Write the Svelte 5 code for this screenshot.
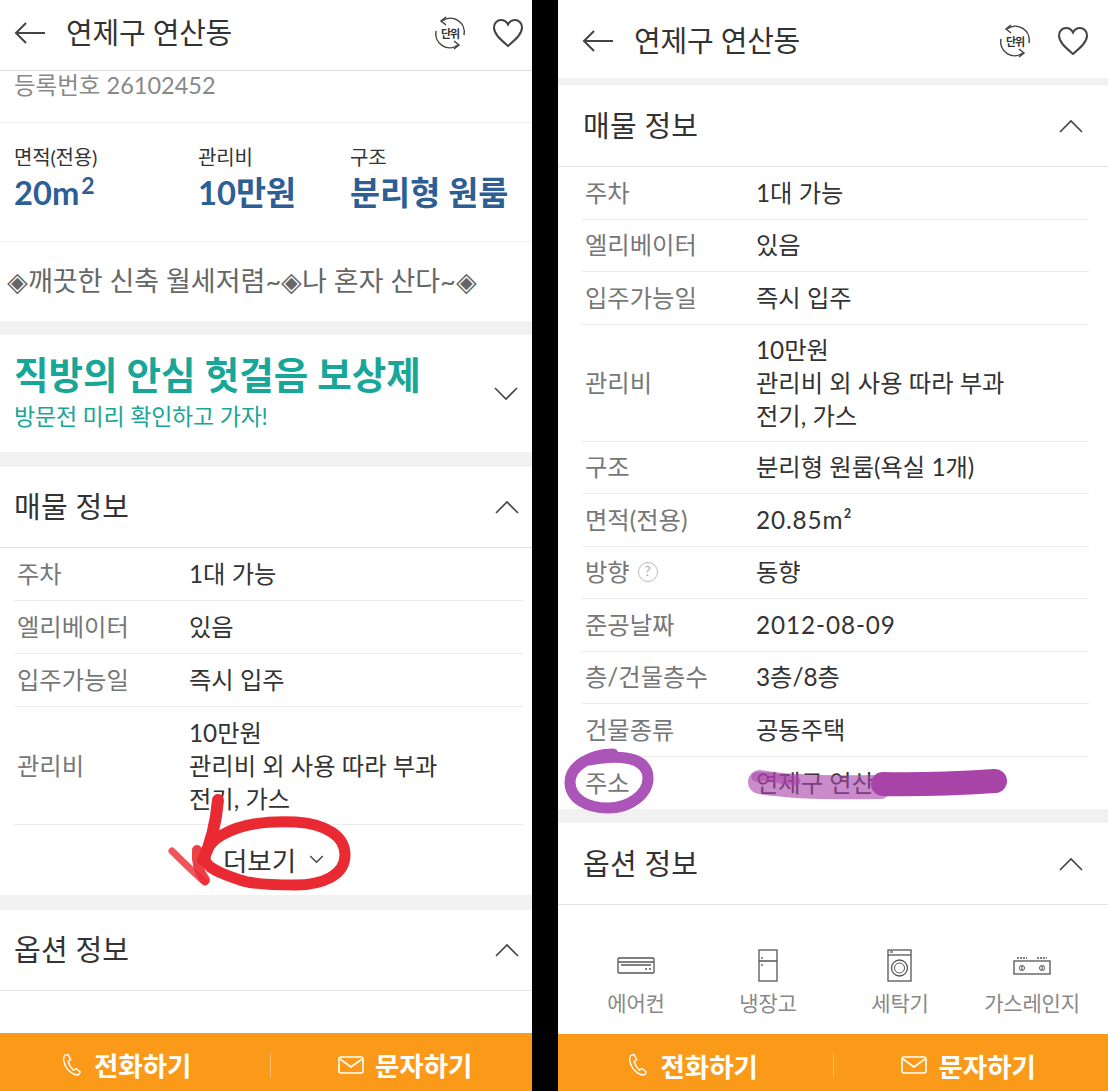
<script>
  const leftRows = [
    { label: '주차', lines: ['1대 가능'] },
    { label: '엘리베이터', lines: ['있음'] },
    { label: '입주가능일', lines: ['즉시 입주'] },
    { label: '관리비', lines: ['10만원', '관리비 외 사용 따라 부과', '전기, 가스'], tall: true }
  ];
  const rightRows = [
    ...leftRows,
    { label: '구조', lines: ['분리형 원룸(욕실 1개)'] },
    { label: '면적(전용)', lines: ['20.85m²'], num: true },
    { label: '방향', lines: ['동향'], help: true },
    { label: '준공날짜', lines: ['2012-08-09'], num: true },
    { label: '층/건물층수', lines: ['3층/8층'] },
    { label: '건물종류', lines: ['공동주택'] },
    { label: '주소', lines: ['연제구 연산동'], last: true }
  ];
  const stats = [
    { label: '면적(전용)', value: '20m', sup: '2', width: 184 },
    { label: '관리비', value: '10만원', width: 152 },
    { label: '구조', value: '분리형 원룸', width: 170 }
  ];
  const options = ['에어컨', '냉장고', '세탁기', '가스레인지'];
</script>

{#snippet back()}
  <svg class="back" viewBox="0 0 32 24" width="32" height="24" fill="none" stroke="#444" stroke-width="2">
    <path d="M31 12H2M12 2 2 12l10 10" />
  </svg>
{/snippet}

{#snippet header(sub)}
  <header class="top" class:sub>
    {@render back()}
    <h1>연제구 연산동</h1>
    <div class="unit">
      <svg viewBox="0 0 34 34" width="34" height="34" fill="none" stroke="#444" stroke-width="1.500">
        <path d="M9 5A14 14 0 0 1 31 19M25 29A14 14 0 0 1 3 15" />
        <path d="M13 1 8 5l5 4M21 33l5-4-5-4" />
      </svg>
      <span>단위</span>
    </div>
    <svg class="heart" viewBox="0 0 32 30" width="32" height="30" fill="none" stroke="#444" stroke-width="2">
      <path d="M16 28C8 21 2 16 2 9.500C2 5 5.500 2 9 2c3 0 5.500 1.500 7 4.500C17.500 3.500 20 2 23 2c3.500 0 7 3 7 7.500C30 16 24 21 16 28Z" />
    </svg>
  </header>
{/snippet}

{#snippet sectionHead(title)}
  <div class="section-head">
    <h2>{title}</h2>
    <svg viewBox="0 0 24 14" width="24" height="14" fill="none" stroke="#444" stroke-width="1.600"><path d="M1 13 12 2l11 11" /></svg>
  </div>
{/snippet}

{#snippet infoRows(rows)}
  <div class="rows">
    {#each rows as row}
      <div class="row" class:tall={row.tall} class:last={row.last}>
        <div class="label">
          {row.label}
          {#if row.help}<span class="help">?</span>{/if}
        </div>
        <div class="value" class:num={row.num}>
          {#each row.lines as line}<div>{line}</div>{/each}
        </div>
      </div>
    {/each}
  </div>
{/snippet}

{#snippet actions()}
  <div class="actions">
    <div class="action call">
      <svg viewBox="0 0 24 26" width="21" height="24" fill="none" stroke="#fff" stroke-width="1.600" stroke-linejoin="round">
        <path d="M3 2 7 1l3 6-3 2c1 4 3 7 6 10l3-2 5 4-2 3c-2 1-5 0-8-2C6 19 3 13 2 8 1.600 5 2 3 3 2Z" />
      </svg>
      <span>전화하기</span>
    </div>
    <i></i>
    <div class="action sms">
      <svg viewBox="0 0 26 18" width="26" height="18" fill="none" stroke="#fff" stroke-width="1.600">
        <rect x="1" y="1" width="24" height="16" rx="2" /><path d="m2 3 11 8 11-8" />
      </svg>
      <span>문자하기</span>
    </div>
  </div>
{/snippet}

<main class="page">
  <section class="phone left">
    {@render header(false)}
    <div class="reg">등록번호 26102452</div>
    <div class="stats">
      {#each stats as s}
        <div style="width: {s.width}px">
          <div class="stat-label">{s.label}</div>
          <div class="stat-value">{s.value}{#if s.sup}<sup>{s.sup}</sup>{/if}</div>
        </div>
      {/each}
    </div>
    <p class="desc">◈깨끗한 신축 월세저렴~◈나 혼자 산다~◈</p>
    <div class="promo">
      <div class="promo-text">
        <div class="promo-title">직방의 안심 헛걸음 보상제</div>
        <div class="promo-sub">방문전 미리 확인하고 가자!</div>
      </div>
      <svg viewBox="0 0 24 14" width="24" height="14" fill="none" stroke="#444" stroke-width="1.600"><path d="M1 1l11 11L23 1" /></svg>
    </div>
    {@render sectionHead('매물 정보')}
    {@render infoRows(leftRows)}
    <div class="more">
      <span>더보기</span>
      <svg viewBox="0 0 16 10" width="15" height="9" fill="none" stroke="#444" stroke-width="1.500"><path d="m1 1 7 7 7-7" /></svg>
      <svg class="scribble red" viewBox="0 0 190 100" width="190" height="100" fill="none" stroke="#ea2a33" stroke-linecap="round" stroke-linejoin="round">
        <path stroke-width="11" d="M56 24C80 10 110 10 130 11c30 2 49 14 49 33 0 20-22 30-50 30-22 0-44-1-55-5-18-6-35-12-35-22 0-9 8-18 17-23" />
        <path stroke-width="12" d="M52-11C50 12 44 34 37 49" />
        <path stroke-width="7" opacity=".8" d="M6 40C16 50 28 62 39 71" />
        <path stroke-width="10" opacity=".9" d="M31 39c-1 12 2 22 8 30" />
      </svg>
    </div>
    {@render sectionHead('옵션 정보')}
    <div class="spacer"></div>
    {@render actions()}
  </section>

  <section class="phone right">
    {@render header(true)}
    {@render sectionHead('매물 정보')}
    {@render infoRows(rightRows)}
    {@render sectionHead('옵션 정보')}
    <div class="options">
      {#each options as name, i}
        <div class="option">
          <div class="opt-icon">
            {#if i === 0}
              <svg viewBox="0 0 38 20" width="38" height="20" fill="none" stroke="#555" stroke-width="1.300">
                <rect x="1" y="2" width="36" height="15" rx="1" /><path d="M1 6h36M4 9h30" /><path d="M28 13h2M32 13h2" />
              </svg>
            {:else if i === 1}
              <svg viewBox="0 0 22 34" width="22" height="34" fill="none" stroke="#555" stroke-width="1.300">
                <rect x="2" y="1" width="18" height="31" /><path d="M2 12h18M5 8v2M5 15v2" />
              </svg>
            {:else if i === 2}
              <svg viewBox="0 0 26 34" width="26" height="34" fill="none" stroke="#555" stroke-width="1.300">
                <rect x="1" y="1" width="23" height="31" /><path d="M1 6h23" /><circle cx="12.500" cy="19" r="8" /><circle cx="12.500" cy="19" r="5" stroke-width="1" /><path d="M3 3h3" />
              </svg>
            {:else}
              <svg viewBox="0 0 38 20" width="38" height="20" fill="none" stroke="#555" stroke-width="1.300">
                <rect x="1" y="5" width="36" height="13" /><path d="M4 2h10M24 2h10" stroke-dasharray="2 1" /><circle cx="9" cy="12" r="2.500" stroke-width="1" /><circle cx="29" cy="12" r="2.500" stroke-width="1" /><path d="M9 10v4M29 10v4" stroke-width="1" />
              </svg>
            {/if}
          </div>
          <div class="opt-name">{name}</div>
        </div>
      {/each}
    </div>
    {@render actions()}
    <svg class="scribble circle" viewBox="0 0 92 68" width="92" height="68" fill="none" stroke="#ac55b8" stroke-width="11" stroke-linecap="round">
      <path d="M50 8C28 8 7 20 7 36c0 16 16 26 38 26 22 0 40-14 40-30C85 16 68 6 26 14" />
    </svg>
    <svg class="scribble blot" viewBox="0 0 260 34" width="260" height="34" fill="none" stroke-linecap="round" stroke-width="24">
      <path stroke="#a843a8" opacity=".62" d="M12 15c30 5 70 6 120 5" />
      <path stroke="#a843a8" d="M135 17c40 1 80-1 112-3" />
      <path stroke="#a843a8" opacity=".55" stroke-width="9" d="M8 10c10-2 20 2 40 4" />
    </svg>
  </section>
</main>

<style>
  :global(body) {
    margin: 0;
    background: #000;
  }

  .page {
    display: flex;
    justify-content: space-between;
    width: 1108px;
    height: 1091px;
    overflow: hidden;
    background: #000;
    color: #333;
    font-family: Lato, "Noto Sans CJK KR", sans-serif;
  }

  .phone {
    position: relative;
    display: flex;
    flex-direction: column;
    height: 1091px;
    background: #fff;
  }

  .left {
    width: 532px;
    --pad: 14px;
    --label-w: 172px;
    --row-h: 53px;
    --tall-h: 118px;
    --call-pad: 0 16px 0 0;
    --sms-pad: 0 0 0 8px;
    --bar-h: 58px;
  }

  .right {
    width: 550px;
    --pad: 24px;
    --label-w: 171px;
    --row-h: 52.500px;
    --tall-h: 117px;
    --call-pad: 0 4px 0 0;
    --sms-pad: 0 4px 0 0;
    --bar-h: 57px;
  }

  .top {
    display: flex;
    align-items: center;
    height: 71px;
    padding: 0 8px 5px 14px;
    box-sizing: border-box;
    border-bottom: 1px solid #ddd;
  }

  .top.sub {
    height: 78px;
    padding: 3px 19px 0 24px;
    border-bottom: 0;
  }

  .top h1 {
    flex: 1;
    margin: 0 0 0 20px;
    font-size: 29px;
    font-weight: 400;
    line-height: 36px;
    letter-spacing: -0.2px;
  }

  .unit {
    position: relative;
    display: flex;
    align-items: center;
    justify-content: center;
    width: 34px;
    height: 34px;
    margin-right: 25px;
  }

  .unit svg {
    position: absolute;
    inset: 0;
  }

  .unit span {
    font-size: 11px;
    font-weight: 700;
    letter-spacing: -1px;
  }

  .reg {
    height: 51px;
    padding: 0 14px;
    border-bottom: 1px solid #eee;
    color: #888;
    font-size: 23.500px;
    line-height: 29px;
  }

  .stats {
    display: flex;
    height: 119px;
    padding: 21px 0 0 14px;
    box-sizing: border-box;
    border-bottom: 1px solid #eee;
  }

  .stat-label {
    font-size: 20px;
    line-height: 26px;
    letter-spacing: -0.2px;
  }

  .stat-value {
    color: #2d5e94;
    font-size: 32.700px;
    font-weight: 700;
    line-height: 46px;
    white-space: nowrap;
  }

  .stat-value sup {
    font-size: 23px;
    line-height: 0;
    vertical-align: 11px;
    margin-left: 2px;
  }

  .desc {
    height: 79px;
    margin: 0;
    padding: 0 0 0 7px;
    color: #666;
    font-size: 27px;
    line-height: 78px;
    white-space: nowrap;
  }

  .promo {
    display: flex;
    align-items: center;
    justify-content: space-between;
    height: 131px;
    padding: 0 14px;
    box-sizing: border-box;
    border-top: 14px solid #f1f1f1;
  }

  .promo-text {
    margin-bottom: 4px;
  }

  .promo-title {
    color: #17a697;
    font-size: 37.500px;
    font-weight: 700;
    line-height: 46px;
    white-space: nowrap;
  }

  .promo-sub {
    margin-top: 2px;
    color: #17a697;
    font-size: 23px;
    line-height: 32px;
    letter-spacing: -0.2px;
  }

  .section-head {
    display: flex;
    align-items: center;
    justify-content: space-between;
    height: 96px;
    padding: 0 13px 0 14px;
    box-sizing: border-box;
    border-top: 15px solid #f1f1f1;
    border-bottom: 1px solid #e4e4e4;
  }

  .right .section-head {
    padding: 0 25px;
    border-top-width: 14px;
  }

  .right .top + .section-head {
    height: 89px;
    border-top-width: 7px;
  }

  .section-head h2 {
    margin: 0 0 4px;
    font-size: 29px;
    font-weight: 400;
    letter-spacing: 0.2px;
  }

  .rows {
    display: flex;
    flex-direction: column;
    padding: 0 var(--pad);
  }

  .left .rows {
    padding-right: 9px;
  }

  .right .rows {
    padding-right: 19px;
  }

  .row {
    display: flex;
    align-items: center;
    height: var(--row-h);
    padding: 0 0 1px 3px;
    border-bottom: 1px solid #ececec;
    box-sizing: border-box;
    font-size: 24.300px;
    line-height: 33px;
  }

  .row.tall {
    height: var(--tall-h);
  }

  .row.last {
    border-bottom: 0;
  }

  .label {
    display: flex;
    align-items: center;
    gap: 8px;
    flex: 0 0 var(--label-w);
    color: #777;
  }

  .help {
    display: inline-flex;
    align-items: center;
    justify-content: center;
    width: 18px;
    height: 18px;
    border: 1px solid #bbb;
    border-radius: 50%;
    color: #aaa;
    font-size: 13px;
    line-height: 1;
  }

  .value {
    color: #333;
    white-space: nowrap;
  }

  .value.num {
    letter-spacing: 0.9px;
  }

  .more {
    position: relative;
    display: flex;
    align-items: center;
    justify-content: center;
    gap: 13px;
    height: 70px;
    padding-bottom: 2px;
    box-sizing: border-box;
    font-size: 26.500px;
  }

  .more span {
    margin-left: 15px;
  }

  .scribble {
    position: absolute;
    pointer-events: none;
  }

  .red {
    left: 166px;
    top: -14px;
    overflow: visible;
  }

  .circle {
    left: 5px;
    top: 746px;
  }

  .blot {
    left: 190px;
    top: 767px;
  }

  .spacer {
    flex: 1;
  }

  .options {
    flex: 1;
    display: grid;
    grid-template-columns: repeat(4, 132px);
    padding: 43px 0 0 12px;
    box-sizing: border-box;
  }

  .option {
    display: flex;
    flex-direction: column;
    align-items: center;
  }

  .opt-icon {
    display: flex;
    align-items: center;
    justify-content: center;
    height: 36px;
  }

  .opt-name {
    margin-top: 4px;
    color: #888;
    font-size: 21px;
    line-height: 30px;
    letter-spacing: -0.2px;
    white-space: nowrap;
  }

  .actions {
    display: flex;
    align-items: center;
    flex: 0 0 var(--bar-h);
    padding-top: 5px;
    box-sizing: border-box;
    background: #fb9a19;
    color: #fff;
  }

  .action {
    flex: 1;
    display: flex;
    align-items: center;
    justify-content: center;
    gap: 11px;
    font-size: 26.500px;
    font-weight: 700;
  }

  .call {
    padding: var(--call-pad);
  }

  .sms {
    padding: var(--sms-pad);
  }

  .actions i {
    width: 1px;
    height: 24px;
    background: #fdbf6a;
  }
</style>
